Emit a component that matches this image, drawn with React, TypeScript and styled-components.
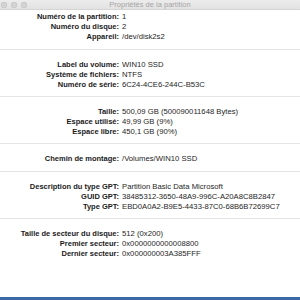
import React from 'react'
import styled, { createGlobalStyle } from 'styled-components'

const GlobalStyle = createGlobalStyle`
  html, body {
    margin: 0;
    padding: 0;
    background: #ffffff;
  }
  body {
    font-family: 'Liberation Sans', Arial, sans-serif;
    overflow: hidden;
  }
`

type Row = { label: string; value: string }

const groups: Array<Array<Row>> = [
  [
    { label: 'Numéro de la partition:', value: '1' },
    { label: 'Numéro du disque:', value: '2' },
    { label: 'Appareil:', value: '/dev/disk2s2' },
  ],
  [
    { label: 'Label du volume:', value: 'WIN10 SSD' },
    { label: 'Système de fichiers:', value: 'NTFS' },
    { label: 'Numéro de série:', value: '6C24-4CE6-244C-B53C' },
  ],
  [
    { label: 'Taille:', value: '500,09 GB (500090011648 Bytes)' },
    { label: 'Espace utilisé:', value: '49,99 GB (9%)' },
    { label: 'Espace libre:', value: '450,1 GB (90%)' },
  ],
  [{ label: 'Chemin de montage:', value: '/Volumes/WIN10 SSD' }],
  [
    { label: 'Description du type GPT:', value: 'Partition Basic Data Microsoft' },
    { label: 'GUID GPT:', value: '38485312-3650-48A9-996C-A20A8C8B2847' },
    { label: 'Type GPT:', value: 'EBD0A0A2-B9E5-4433-87C0-68B6B72699C7' },
  ],
  [
    { label: 'Taille de secteur du disque:', value: '512 (0x200)' },
    { label: 'Premier secteur:', value: '0x0000000000008800' },
    { label: 'Dernier secteur:', value: '0x000000003A385FFF' },
  ],
]

// [padding-top, padding-bottom] for each group
const spacing = [
  [2, 7],
  [10, 6],
  [10, 6],
  [10, 7],
  [10, 6],
  [10, 6],
]

const Window = styled.div`
  width: 300px;
  height: 300px;
  display: flex;
  flex-direction: column;
  background: #ffffff;
  overflow: hidden;
`

const TitleBar = styled.div`
  height: 10px;
  flex: none;
  display: flex;
  align-items: center;
  position: relative;
  background: linear-gradient(#ececec, #e2e2e2);
  border-bottom: 1px solid #d4d4d4;
  box-sizing: border-box;
`

const Lights = styled.div`
  display: flex;
  gap: 4px;
  padding-left: 1px;
`

const Light = styled.span`
  width: 6px;
  height: 6px;
  border-radius: 50%;
  background: #d3d3d3;
  box-shadow: inset 0 0 0 0.5px #c2c2c2;
`

const Title = styled.div`
  position: absolute;
  left: 0;
  right: 0;
  text-align: center;
  font-size: 7.5px;
  line-height: 10px;
  color: #a6a6a6;
`

const Body = styled.div`
  flex: 1;
`

const Section = styled.div<{ $top: number; $bottom: number }>`
  display: grid;
  grid-template-columns: 119px 1fr;
  column-gap: 3px;
  padding: ${(p) => p.$top}px 0 ${(p) => p.$bottom}px;
  border-bottom: 1px solid #e4e4e4;

  &:last-of-type {
    border-bottom: none;
  }
`

const Label = styled.div`
  text-align: right;
  font-weight: bold;
  font-size: 7.5px;
  line-height: 10px;
  color: #1a1a1a;
  white-space: nowrap;
`

const Value = styled.div`
  font-size: 7.7px;
  line-height: 10px;
  color: #262626;
  white-space: nowrap;
`

const BottomBar = styled.div`
  height: 3px;
  flex: none;
  background: #3b6aa6;
`

const App = () => {
  return (
    <>
      <GlobalStyle />
      <Window>
        <TitleBar>
          <Lights>
            <Light />
            <Light />
            <Light />
          </Lights>
          <Title>Propriétés de la partition</Title>
        </TitleBar>
        <Body>
          {groups.map((rows, i) => (
            <Section key={i} $top={spacing[i][0]} $bottom={spacing[i][1]}>
              {rows.map((row) => (
                <React.Fragment key={row.label}>
                  <Label>{row.label}</Label>
                  <Value>{row.value}</Value>
                </React.Fragment>
              ))}
            </Section>
          ))}
        </Body>
        <BottomBar />
      </Window>
    </>
  )
}

export default App
